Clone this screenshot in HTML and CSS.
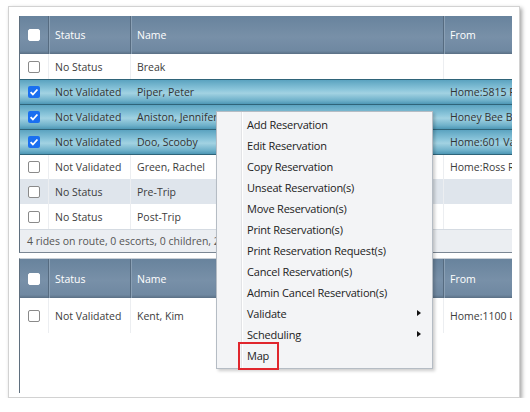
FILE: index.html
```html
<!DOCTYPE html>
<html lang="en">
<head>
    <meta charset="UTF-8">
    <title>Route Reservations</title>
    <link rel="stylesheet" href="styles.css">
</head>
<body>
    <div class="frame">
        <div class="grid grid-top">
            <div class="row head">
                <div class="cell cb"><span class="box"></span></div>
                <div class="cell">Status</div>
                <div class="cell">Name</div>
                <div class="cell">From</div>
            </div>
            <div class="row">
                <div class="cell cb"><span class="box"></span></div>
                <div class="cell">No Status</div>
                <div class="cell">Break</div>
                <div class="cell"></div>
            </div>
            <div class="row sel">
                <div class="cell cb"><span class="box on"></span></div>
                <div class="cell">Not Validated</div>
                <div class="cell">Piper, Peter</div>
                <div class="cell">Home:5815 Pine St</div>
            </div>
            <div class="row sel">
                <div class="cell cb"><span class="box on"></span></div>
                <div class="cell">Not Validated</div>
                <div class="cell">Aniston, Jennifer</div>
                <div class="cell">Honey Bee Bakery</div>
            </div>
            <div class="row sel">
                <div class="cell cb"><span class="box on"></span></div>
                <div class="cell">Not Validated</div>
                <div class="cell">Doo, Scooby</div>
                <div class="cell">Home:601 Valley Rd</div>
            </div>
            <div class="row">
                <div class="cell cb"><span class="box"></span></div>
                <div class="cell">Not Validated</div>
                <div class="cell">Green, Rachel</div>
                <div class="cell">Home:Ross Rd</div>
            </div>
            <div class="row hover">
                <div class="cell cb"><span class="box"></span></div>
                <div class="cell">No Status</div>
                <div class="cell">Pre-Trip</div>
                <div class="cell"></div>
            </div>
            <div class="row">
                <div class="cell cb"><span class="box"></span></div>
                <div class="cell">No Status</div>
                <div class="cell">Post-Trip</div>
                <div class="cell"></div>
            </div>
            <div class="footer">4 rides on route, 0 escorts, 0 children, 2 wheelchairs</div>
        </div>

        <div class="grid grid-bottom">
            <div class="row head">
                <div class="cell cb"><span class="box"></span></div>
                <div class="cell">Status</div>
                <div class="cell">Name</div>
                <div class="cell">From</div>
            </div>
            <div class="row tall">
                <div class="cell cb"><span class="box"></span></div>
                <div class="cell">Not Validated</div>
                <div class="cell">Kent, Kim</div>
                <div class="cell">Home:1100 Lake Dr</div>
            </div>
        </div>

        <!-- context menu over the grid -->
        <ul class="menu">
            <li>Add Reservation</li>
            <li>Edit Reservation</li>
            <li>Copy Reservation</li>
            <li>Unseat Reservation(s)</li>
            <li>Move Reservation(s)</li>
            <li>Print Reservation(s)</li>
            <li>Print Reservation Request(s)</li>
            <li>Cancel Reservation(s)</li>
            <li>Admin Cancel Reservation(s)</li>
            <li class="sub">Validate</li>
            <li class="sub">Scheduling</li>
            <li class="mark">Map</li>
        </ul>
    </div>
</body>
</html>
```

FILE: styles.css
```css
body {
    margin: 0;
    background: #fff;
    font-family: "Open Sans", "Noto Sans", sans-serif;
    font-size: 10.5px;
    color: #3c3c3c;
}
.frame {
    position: relative;
    box-sizing: border-box;
    width: 512px;
    height: 392px;
    margin: 6px 0 0 8px;
    padding: 9px 7px 0 10px;
    border: 1px solid #d2d2d2;
    box-shadow: 2px 2px 4px rgba(0, 0, 0, 0.35);
    background: #fff;
}
.grid {
    border-left: 1px solid #5f6f7e;
    overflow: hidden;
}
.grid-top {
    border-bottom: 1px solid #7b8794;
}
.grid-bottom {
    margin-top: 5px;
    height: 134px;
    border-top: 1px solid #c9cfd6;
}
.row {
    display: grid;
    grid-template-columns: 28px 82px 313px 69px;
    height: 25px;
    background: #fff;
}
.cell {
    display: flex;
    align-items: center;
    padding-left: 6px;
    white-space: nowrap;
    overflow: hidden;
    border-left: 1px solid #eceef1;
}
.cell.cb {
    justify-content: center;
    padding-left: 0;
    border-left: none;
}
.head {
    height: 38px;
    color: #fff;
    background: linear-gradient(#68839d, #7890a8 55%, #6f88a1 92%, #5a6f84);
}
.head .cell {
    border-left: 1px solid #566b80;
    box-shadow: inset 1px 0 0 #8aa0b5;
}
.head .cell.cb {
    border-left: none;
    box-shadow: none;
}
.grid-bottom .head {
    height: 39px;
}
.tall {
    height: 35px;
}
.sel {
    color: #333;
    border-top: 1px solid #2f6479;
    height: 24px;
    background: linear-gradient(#5ba3c0, #8cc6db 40%, #a2d2e2 55%, #6fb1ca 85%, #4d97b5);
}
.sel .cell {
    border-left-color: transparent;
}
.sel + .row:not(.sel) {
    border-top: 1px solid #2f6479;
    height: 24px;
}
.hover {
    background: #dfe5ec;
}
.box {
    box-sizing: border-box;
    width: 12px;
    height: 12px;
    border: 1px solid #8a8a8a;
    border-radius: 2px;
    background: #fff;
}
.head .box {
    border-color: #fff;
}
.box.on {
    border: none;
    background: #1a6ff0 url("data:image/svg+xml,%3Csvg xmlns='http://www.w3.org/2000/svg' viewBox='0 0 12 12'%3E%3Cpath d='M2.6 6.2l2.3 2.3 4.5-5' fill='none' stroke='%23fff' stroke-width='1.8'/%3E%3C/svg%3E") center / 12px 12px no-repeat;
}
.footer {
    height: 22px;
    line-height: 22px;
    padding-left: 7px;
    color: #555;
    background: #ebeef2;
    border-top: 1px solid #d5dbe2;
    white-space: nowrap;
}
.menu {
    position: absolute;
    left: 207px;
    top: 104px;
    width: 217px;
    box-sizing: border-box;
    margin: 0;
    padding: 2px;
    list-style: none;
    font-size: 11px;
    color: #222;
    background: #f3f4f6 linear-gradient(to right, transparent 24px, #e2e3e6 24px, #e2e3e6 25px, #fff 25px, #fff 26px, transparent 26px);
    border: 1px solid #b5bcc4;
    box-shadow: 2px 2px 3px rgba(0, 0, 0, 0.2);
}
.menu li {
    position: relative;
    height: 21px;
    line-height: 21px;
    padding-left: 28px;
    white-space: nowrap;
    letter-spacing: -0.2px;
}
.menu .sub::after {
    content: "";
    position: absolute;
    right: 9px;
    top: 7px;
    border-left: 4px solid #111;
    border-top: 3.5px solid transparent;
    border-bottom: 3.5px solid transparent;
}
.menu .mark::before {
    content: "";
    position: absolute;
    left: 19px;
    top: -3px;
    width: 37px;
    height: 24px;
    border: 2px solid #e0262d;
}
```
